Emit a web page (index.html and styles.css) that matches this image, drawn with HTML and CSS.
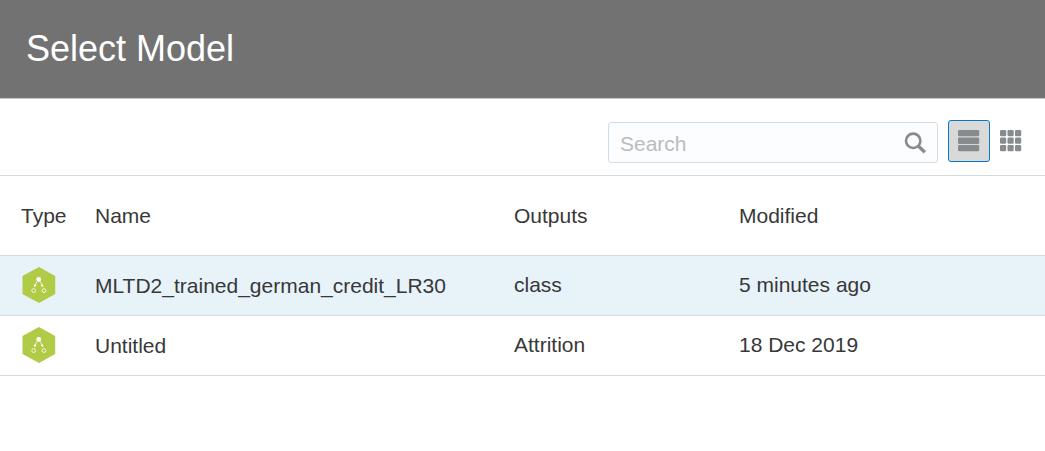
FILE: index.html
```html
<!DOCTYPE html>
<html lang="en">
<head>
<meta charset="utf-8">
<title>Select Model</title>
<link rel="stylesheet" href="styles.css">
</head>
<body>
<svg class="defs" width="0" height="0" aria-hidden="true">
  <symbol id="model" viewBox="0 0 34 36">
    <path fill="#b0cb46" d="M17 0 33.200 9V27L17 36 .5 27V9z"/>
    <g fill="none" stroke="#f1f6dc">
      <path stroke-width="1" d="m15 14.500-2.400 4.500M18.200 14.500l2.400 4.500"/>
      <circle cx="11.700" cy="23.600" r="1.900"/>
      <circle cx="22" cy="23.600" r="1.900"/>
    </g>
    <g fill="#fff"><circle cx="16.700" cy="12.500" r="2.400"/><path d="m12.300 17.200 2.500 1.400-2.800 1.600zM21 17.200l-2.500 1.400 2.800 1.600z"/></g>
  </symbol>
</svg>
<header class="titlebar"><h1 class="title">Select Model</h1></header>
<div class="toolbar">
  <div class="search">
    <input class="search-input" type="text" placeholder="Search" aria-label="Search">
    <svg class="search-icon" viewBox="0 0 22 22" fill="none" stroke="#868b8e">
      <circle cx="9.200" cy="8.800" r="7.200" stroke-width="2.600"/>
      <path stroke-width="3.400" d="m14.300 14 6.600 6.200"/>
    </svg>
  </div>
  <button class="view view-active" aria-label="List view">
    <svg width="22" height="22" fill="#868b8e"><rect x="0" y="0" width="21.200" height="6.300" rx="1.200"/><rect x="0" y="7.600" width="21.200" height="6.300" rx="1.200"/><rect x="0" y="15" width="21.200" height="6.300" rx="1.200"/></svg>
  </button>
  <button class="view" aria-label="Grid view">
    <svg width="22" height="22" fill="#868b8e"><rect x="0" y="0" width="6.200" height="6.300" rx="1.200"/><rect x="7.500" y="0" width="6.200" height="6.300" rx="1.200"/><rect x="15" y="0" width="6.200" height="6.300" rx="1.200"/><rect x="0" y="7.500" width="6.200" height="6.300" rx="1.200"/><rect x="7.500" y="7.500" width="6.200" height="6.300" rx="1.200"/><rect x="15" y="7.500" width="6.200" height="6.300" rx="1.200"/><rect x="0" y="15" width="6.200" height="6.300" rx="1.200"/><rect x="7.500" y="15" width="6.200" height="6.300" rx="1.200"/><rect x="15" y="15" width="6.200" height="6.300" rx="1.200"/></svg>
  </button>
</div>
<main class="models">
  <div class="row row-head"><span>Type</span><span>Name</span><span>Outputs</span><span>Modified</span></div>
  <div class="row row-selected"><svg class="model-icon"><use href="#model"/></svg><span class="name">MLTD2_trained_german_credit_LR30</span><span>class</span><span>5 minutes ago</span></div>
  <div class="row"><svg class="model-icon"><use href="#model"/></svg><span class="name">Untitled</span><span>Attrition</span><span>18 Dec 2019</span></div>
</main>
</body>
</html>
```
FILE: styles.css
```css
* { box-sizing: border-box; }
body {
  margin: 0;
  background: #fff;
  color: #383838;
  font: 21px/24px "Liberation Sans", Arial, sans-serif;
}
.defs { display: block; }
.titlebar {
  display: flex;
  align-items: center;
  height: 99px;
  padding: 0 26px;
  background: #727272;
  border-bottom: 1px solid #c8c8c8;
}
.title {
  margin: 0;
  color: #fff;
  font-size: 36px;
  font-weight: 400;
  line-height: 42px;
}
.toolbar {
  display: flex;
  justify-content: flex-end;
  align-items: flex-start;
  height: 77px;
  padding: 21px 13px 0 0;
  border-bottom: 1px solid #d6d9db;
}
.search {
  display: flex;
  align-items: center;
  width: 330px;
  height: 41px;
  margin: 2px 10px 0 0;
  padding: 0 11px;
  background: #fcfdfe;
  border: 1px solid #d2dde8;
  border-radius: 3px;
}
.search-input {
  flex: 1;
  min-width: 0;
  height: 39px;
  padding: 2px 0 0;
  background: transparent;
  border: 0;
  outline: 0;
  font: inherit;
}
.search-input::placeholder { color: #bcbcbc; }
.search-icon { width: 22px; height: 22px; }
.view {
  width: 42px;
  height: 42px;
  padding: 9px;
  background: none;
  border: 1px solid transparent;
  border-radius: 3px;
}
.view svg { display: block; }
.view-active { background: #d9d9d9; border-color: #0578c6; }
.row {
  display: grid;
  grid-template-columns: 74px 419px 225px 1fr;
  align-items: center;
  height: 60px;
  padding: 0 0 2px 21px;
  border-bottom: 1px solid #d3dce4;
}
.row-head { height: 80px; padding-bottom: 0; }
.row-selected { background: #e7f2f9; }
.model-icon { display: block; width: 34px; height: 36px; margin-left: 1px; }
.name { padding-top: 2px; }
```
